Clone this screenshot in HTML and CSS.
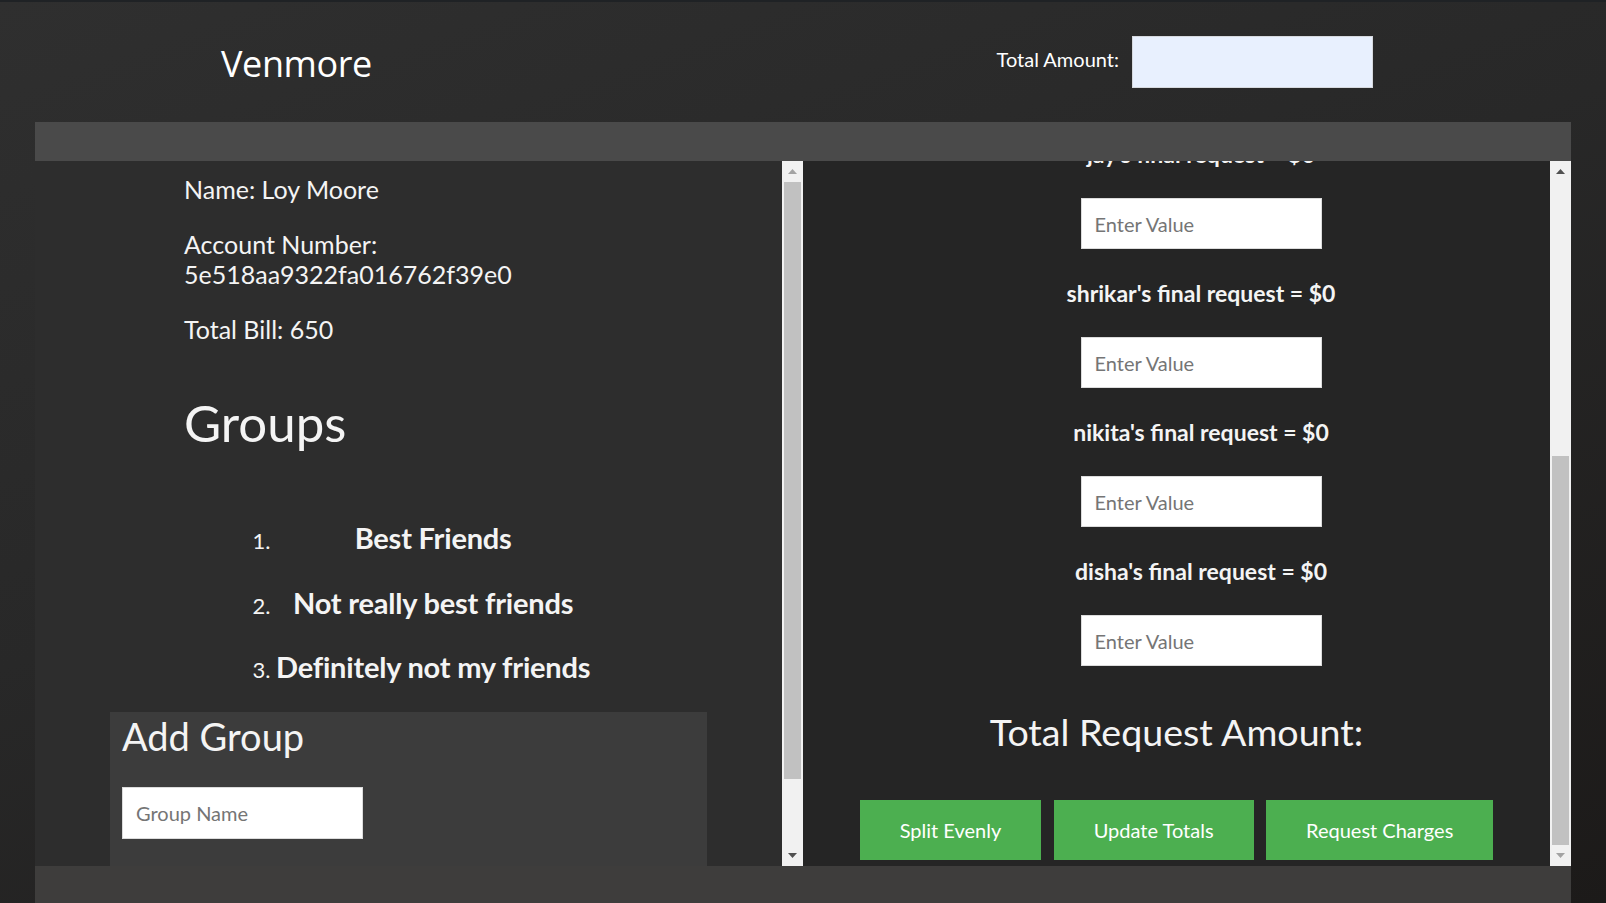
FILE: index.html
```html
<!DOCTYPE html>
<html lang="en">
<head>
<meta charset="utf-8">
<title>Venmore</title>
<link rel="stylesheet" href="styles.css">
</head>
<body>
<header class="topbar">
  <h1 class="brand">Venmore</h1>
  <div class="total-amount">
    <label class="total-label" for="total">Total Amount:</label>
    <input id="total" class="total-input" type="text">
  </div>
</header>

<main class="app">
  <div class="band band-top"></div>
  <div class="columns">
    <section class="column">
      <div class="pane pane-left">
        <div class="info">
          <p>Name: Loy Moore</p>
          <p>Account Number:<br>5e518aa9322fa016762f39e0</p>
          <p>Total Bill: 650</p>
        </div>
        <h2 class="groups-title">Groups</h2>
        <ol class="groups">
          <li><h3>Best Friends</h3></li>
          <li><h3>Not really best friends</h3></li>
          <li><h3>Definitely not my friends</h3></li>
        </ol>
        <div class="add-group">
          <h2>Add Group</h2>
          <input class="field" type="text" placeholder="Group Name">
        </div>
      </div>
      <div class="scrollbar">
        <div class="sb-btn"><svg width="9" height="5" viewBox="0 0 9 5"><polygon points="0,5 4.5,0 9,5" fill="#a3a3a3"/></svg></div>
        <div class="sb-track"><div class="sb-thumb thumb-left"></div></div>
        <div class="sb-btn"><svg width="9" height="5" viewBox="0 0 9 5"><polygon points="0,0 9,0 4.5,5" fill="#505050"/></svg></div>
      </div>
    </section>

    <section class="column">
      <div class="pane pane-right">
        <div class="requests">
          <p class="req-label">jay's final request = $0</p>
          <input class="field" type="text" placeholder="Enter Value">
          <p class="req-label">shrikar's final request = $0</p>
          <input class="field" type="text" placeholder="Enter Value">
          <p class="req-label">nikita's final request = $0</p>
          <input class="field" type="text" placeholder="Enter Value">
          <p class="req-label">disha's final request = $0</p>
          <input class="field" type="text" placeholder="Enter Value">
        </div>
        <h2 class="total-request">Total Request Amount:</h2>
        <div class="actions">
          <button class="btn" type="button">Split Evenly</button>
          <button class="btn" type="button">Update Totals</button>
          <button class="btn" type="button">Request Charges</button>
        </div>
      </div>
      <div class="scrollbar">
        <div class="sb-btn"><svg width="9" height="5" viewBox="0 0 9 5"><polygon points="0,5 4.5,0 9,5" fill="#505050"/></svg></div>
        <div class="sb-track"><div class="sb-thumb thumb-right"></div></div>
        <div class="sb-btn"><svg width="9" height="5" viewBox="0 0 9 5"><polygon points="0,0 9,0 4.5,5" fill="#a3a3a3"/></svg></div>
      </div>
    </section>
  </div>
  <div class="band band-bottom"></div>
</main>
</body>
</html>
```

FILE: styles.css
```css
* { box-sizing: border-box; }

html, body { height: 100%; }

body {
  margin: 0;
  overflow: hidden;
  border-top: 2px solid #1f2225;
  font-family: "Lato", "Liberation Sans", sans-serif;
  color: #f4f4f4;
  background: linear-gradient(160deg, #2f2f2f 0%, #282828 45%, #1c1a19 100%);
}

/* Header */
.topbar {
  height: 120px;
  display: flex;
  align-items: center;
  justify-content: space-between;
  padding: 0 233px 0 221px;
}

.brand {
  margin: 0;
  font-family: "Open Sans", "Noto Sans", sans-serif;
  font-weight: 400;
  font-size: 36px;
  letter-spacing: -0.4px;
  color: #ffffff;
  position: relative;
  top: 1px;
}

.total-amount {
  display: flex;
  align-items: center;
  gap: 13px;
}

.total-label {
  font-size: 20px;
  color: #ffffff;
  position: relative;
  top: -3px;
}

.total-input {
  width: 241px;
  height: 52px;
  border: 1px solid #d6d9de;
  background: #e8f0fe;
}

/* Main frame */
.app {
  margin: 0 35px;
}

.band { width: 100%; }
.band-top { height: 39px; background: #4a4a4a; }
.band-bottom { height: 37px; background: #3e3d3c; }

.columns {
  display: grid;
  grid-template-columns: 1fr 1fr;
  height: 705px;
}

.column {
  display: flex;
  min-width: 0;
  height: 705px;
}

.pane {
  flex: 1;
  min-width: 0;
  overflow: hidden;
}

/* Fake scrollbars */
.scrollbar {
  width: 21px;
  background: #f1f1f1;
  display: flex;
  flex-direction: column;
}

.sb-btn {
  height: 21px;
  display: flex;
  align-items: center;
  justify-content: center;
}

.sb-btn svg { display: block; }

.sb-track {
  flex: 1;
  display: flex;
  flex-direction: column;
  padding: 0 2px;
}

.sb-thumb { background: #c1c1c1; }
.thumb-left { height: 597px; }
.thumb-right { height: 389px; margin-top: auto; }

/* Left pane */
.pane-left {
  background: #2d2d2d;
  padding: 13px 0 0 75px;
}

.info { margin-left: 74px; }

.info p {
  margin: 0 0 25px;
  font-size: 25px;
  line-height: 30px;
}

.groups-title {
  margin: 49px 0 68px 74px;
  font-size: 51px;
  line-height: 60px;
  font-weight: 400;
}

.groups {
  margin: 0 0 0 74px;
  padding-left: 92px;
  width: fit-content;
  font-size: 22px;
}

.groups li + li { margin-top: 31px; }

.groups h3 {
  margin: 0;
  text-align: center;
  font-size: 29px;
  line-height: 33.5px;
  font-weight: 700;
  letter-spacing: -0.2px;
}

.add-group {
  margin-top: 28px;
  width: 597px;
  background: #3c3c3c;
  padding: 2px 12px 60px;
}

.add-group h2 {
  margin: 0 0 29px;
  font-size: 38px;
  line-height: 44px;
  font-weight: 400;
}

.field {
  display: block;
  width: 241px;
  height: 52px;
  border: 1px solid #dcdcdc;
  background: #ffffff;
  padding: 0 13px;
  font-family: "Lato", "Liberation Sans", sans-serif;
  font-size: 20px;
  color: #333;
}

.field::placeholder { color: #757575; }

/* Right pane */
.pane-right {
  background: #252525;
  display: flex;
  flex-direction: column;
  justify-content: flex-end;
  align-items: center;
}

.requests {
  display: flex;
  flex-direction: column;
  align-items: center;
  padding-left: 49px;
  flex-shrink: 0;
}

.requests .field { height: 51px; }

.req-label {
  margin: 30px 0;
  font-size: 23px;
  line-height: 28px;
  font-weight: 700;
  white-space: nowrap;
}

.total-request {
  margin: 43px 0 45px;
  font-size: 37.6px;
  line-height: 46px;
  font-weight: 400;
  flex-shrink: 0;
}

.actions {
  display: flex;
  gap: 12.5px;
  margin-bottom: 6px;
  flex-shrink: 0;
}

.btn {
  height: 60px;
  padding: 0 40px;
  border: none;
  background: #4caf50;
  color: #ffffff;
  font-family: "Lato", "Liberation Sans", sans-serif;
  font-size: 20px;
}
```
